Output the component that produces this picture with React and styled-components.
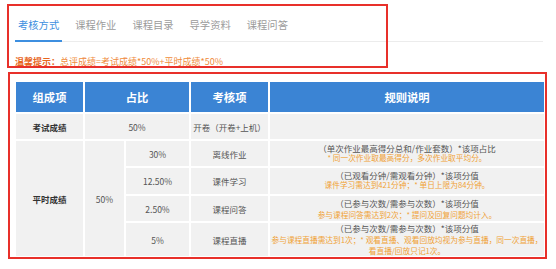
import styled, { createGlobalStyle } from 'styled-components';

const GlobalStyle = createGlobalStyle`
  * { box-sizing: border-box; }
  body {
    margin: 0;
    background: #fff;
    font-family: "Noto Sans CJK SC", "Noto Sans", sans-serif;
  }
`;

const Page = styled.div`
  position: relative;
  width: 556px;
  height: 269px;
  padding-left: 15px;
  overflow: hidden;
`;

const TabBar = styled.div`
  display: flex;
  gap: 10px;
  width: 528px;
  border-bottom: 1px solid #ececec;
`;

const Tab = styled.div`
  padding: 18px 3px 8px;
  margin-bottom: -1px;
  font-size: 10.3px;
  line-height: 14px;
  color: ${(p) => (p.$active ? '#3d8fe0' : '#9b9b9b')};
  border-bottom: 2px solid ${(p) => (p.$active ? '#3d8fe0' : 'transparent')};
  white-space: nowrap;
`;

const Hint = styled.p`
  margin: 14px 0 0;
  font-size: 9px;
  line-height: 12px;
  color: #f08c3c;
  white-space: nowrap;
`;

const HintLabel = styled.span`
  color: #e8661e;
  font-weight: 700;
`;

const Table = styled.table`
  margin: 14px 0 0 1px;
  width: 528px;
  table-layout: fixed;
  border-collapse: separate;
  border-spacing: 0;
`;

const Th = styled.th`
  height: 32px;
  padding: 0;
  background: #3b84d4;
  color: #fff;
  font-size: 11.3px;
  font-weight: 700;
  text-align: center;
  border-right: 2px solid #fff;
  border-bottom: 2px solid #fff;
  &:last-child { border-right: 0; }
`;

const Td = styled.td`
  height: ${(p) => p.$h || 27}px;
  padding: 0;
  background: #f1f1f1;
  color: ${(p) => (p.$strong ? '#333' : '#555')};
  font-size: 8.5px;
  font-weight: ${(p) => (p.$strong ? 700 : 400)};
  line-height: 10px;
  text-align: center;
  vertical-align: middle;
  white-space: nowrap;
  border-right: 2px solid #fff;
  border-bottom: 2px solid #fff;
  &:last-child { border-right: 0; }
`;

const Rule = styled.div`
  padding-bottom: ${(p) => (p.$lh <= 10 ? 2 : 0)}px;
  line-height: ${(p) => p.$lh}px;
`;

const RuleMain = styled.div`
  font-size: 8.5px;
  color: #555;
`;

const RuleNote = styled.div`
  font-size: 7.7px;
  color: #f0a236;
`;

const Mark = styled.div`
  position: absolute;
  left: ${(p) => p.$x}px;
  top: ${(p) => p.$y}px;
  width: ${(p) => p.$w}px;
  height: ${(p) => p.$h}px;
  border: 2px solid #e8302a;
  pointer-events: none;
`;

const tabs = ['考核方式', '课程作业', '课程目录', '导学资料', '课程问答'];

const daily = [
  {
    ratio: '30%',
    item: '离线作业',
    h: 27,
    lh: 10,
    main: '（单次作业最高得分总和/作业套数）*该项占比',
    note: ['* 同一次作业取最高得分，多次作业取平均分。'],
  },
  {
    ratio: '12.50%',
    item: '课件学习',
    h: 28,
    lh: 10,
    main: '（已观看分钟/需观看分钟）*该项分值',
    note: ['课件学习需达到421分钟；* 单日上限为84分钟。'],
  },
  {
    ratio: '2.50%',
    item: '课程问答',
    h: 27,
    lh: 12,
    main: '（已参与次数/需参与次数）*该项分值',
    note: ['参与课程问答需达到2次；* 提问及回复问题均计入。'],
  },
  {
    ratio: '5%',
    item: '课程直播',
    h: 34,
    lh: 11,
    main: '（已参与次数/需参与次数）*该项分值',
    note: [
      '参与课程直播需达到1次；* 观看直播、观看回放均视为参与直播，同一次直播，',
      '看直播/回放只记1次。',
    ],
  },
];

export default function App() {
  return (
    <>
      <GlobalStyle />
      <Page>
        <TabBar>
          {tabs.map((t, i) => (
            <Tab key={t} $active={i === 0}>{t}</Tab>
          ))}
        </TabBar>
        <Hint>
          <HintLabel>温馨提示：</HintLabel>总评成绩=考试成绩*50%+平时成绩*50%
        </Hint>
        <Table>
          <colgroup>
            <col style={{ width: 69 }} />
            <col style={{ width: 41 }} />
            <col style={{ width: 65 }} />
            <col style={{ width: 79 }} />
            <col style={{ width: 274 }} />
          </colgroup>
          <thead>
            <tr>
              <Th>组成项</Th>
              <Th colSpan={2}>占比</Th>
              <Th>考核项</Th>
              <Th>规则说明</Th>
            </tr>
          </thead>
          <tbody>
            <tr>
              <Td $strong>考试成绩</Td>
              <Td colSpan={2}>50%</Td>
              <Td>开卷（开卷+上机）</Td>
              <Td />
            </tr>
            {daily.map((row, i) => (
              <tr key={row.item}>
                {i === 0 && (
                  <>
                    <Td $strong rowSpan={4}>平时成绩</Td>
                    <Td rowSpan={4}>50%</Td>
                  </>
                )}
                <Td $h={row.h}>{row.ratio}</Td>
                <Td $h={row.h}>{row.item}</Td>
                <Td $h={row.h}>
                  <Rule $lh={row.lh}>
                    <RuleMain>{row.main}</RuleMain>
                    {row.note.map((n) => (
                      <RuleNote key={n}>{n}</RuleNote>
                    ))}
                  </Rule>
                </Td>
              </tr>
            ))}
          </tbody>
        </Table>
        <Mark $x={7} $y={4} $w={381} $h={64} />
        <Mark $x={8} $y={72} $w={539} $h={187} />
      </Page>
    </>
  );
}
